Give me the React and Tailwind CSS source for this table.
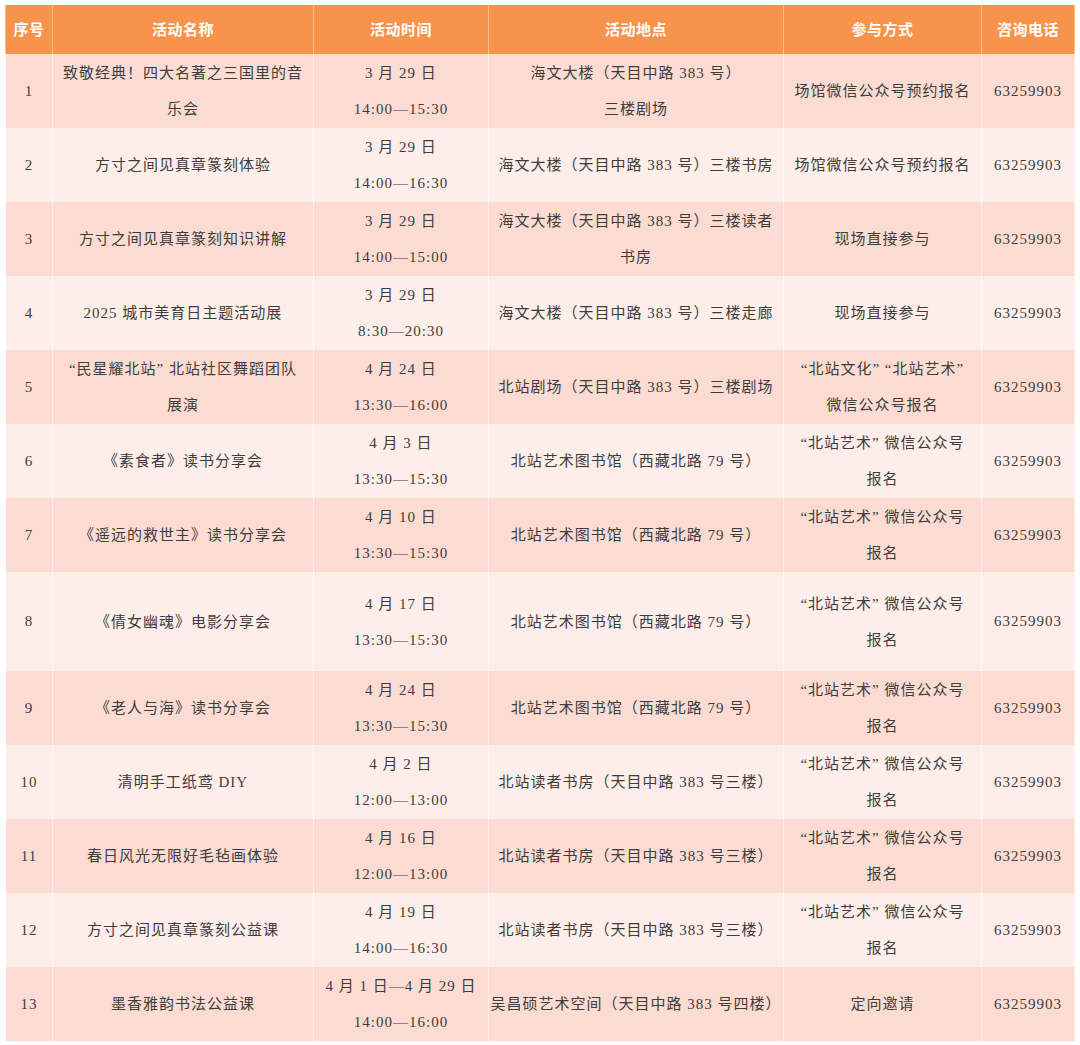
const columns = [
    { title: '序号', w: 'w-[47px]' },
    { title: '活动名称', w: 'w-[261px]' },
    { title: '活动时间', w: 'w-[175px]' },
    { title: '活动地点', w: 'w-[295px]' },
    { title: '参与方式', w: 'w-[198px]' },
    { title: '咨询电话', w: 'w-[93px]' },
]

const WX = ['“北站艺术” 微信公众号', '报名']

const rows = [
    { name: ['致敬经典！四大名著之三国里的音', '乐会'], date: '3 月 29 日', time: '14:00—15:30', place: ['海文大楼（天目中路 383 号）', '三楼剧场'], way: ['场馆微信公众号预约报名'] },
    { name: ['方寸之间见真章篆刻体验'], date: '3 月 29 日', time: '14:00—16:30', place: ['海文大楼（天目中路 383 号）三楼书房'], way: ['场馆微信公众号预约报名'] },
    { name: ['方寸之间见真章篆刻知识讲解'], date: '3 月 29 日', time: '14:00—15:00', place: ['海文大楼（天目中路 383 号）三楼读者', '书房'], way: ['现场直接参与'] },
    { name: ['2025 城市美育日主题活动展'], date: '3 月 29 日', time: '8:30—20:30', place: ['海文大楼（天目中路 383 号）三楼走廊'], way: ['现场直接参与'] },
    { name: ['“民星耀北站” 北站社区舞蹈团队', '展演'], date: '4 月 24 日', time: '13:30—16:00', place: ['北站剧场（天目中路 383 号）三楼剧场'], way: ['“北站文化” “北站艺术”', '微信公众号报名'] },
    { name: ['《素食者》读书分享会'], date: '4 月 3 日', time: '13:30—15:30', place: ['北站艺术图书馆（西藏北路 79 号）'], way: WX },
    { name: ['《遥远的救世主》读书分享会'], date: '4 月 10 日', time: '13:30—15:30', place: ['北站艺术图书馆（西藏北路 79 号）'], way: WX },
    { name: ['《倩女幽魂》电影分享会'], date: '4 月 17 日', time: '13:30—15:30', place: ['北站艺术图书馆（西藏北路 79 号）'], way: WX, tall: true },
    { name: ['《老人与海》读书分享会'], date: '4 月 24 日', time: '13:30—15:30', place: ['北站艺术图书馆（西藏北路 79 号）'], way: WX },
    { name: ['清明手工纸鸢 DIY'], date: '4 月 2 日', time: '12:00—13:00', place: ['北站读者书房（天目中路 383 号三楼）'], way: WX },
    { name: ['春日风光无限好毛毡画体验'], date: '4 月 16 日', time: '12:00—13:00', place: ['北站读者书房（天目中路 383 号三楼）'], way: WX },
    { name: ['方寸之间见真章篆刻公益课'], date: '4 月 19 日', time: '14:00—16:30', place: ['北站读者书房（天目中路 383 号三楼）'], way: WX },
    { name: ['墨香雅韵书法公益课'], date: '4 月 1 日—4 月 29 日', time: '14:00—16:00', place: ['吴昌硕艺术空间（天目中路 383 号四楼）'], way: ['定向邀请'] },
]

function Lines({ lines }) {
    return (
        <div className="flex flex-col items-center leading-[36px]">
            {lines.map((l, i) => (
                <span key={i} className="whitespace-pre">{l}</span>
            ))}
        </div>
    )
}

function Cell({ children }) {
    return (
        <td className="border-x border-white/50 px-1 text-center align-middle">
            {children}
        </td>
    )
}

export default function App() {
    return (
        <div className="w-[1080px] h-[1045px] bg-white pt-[5px] pl-[5px]" style={{ fontFamily: '"Liberation Serif", "Noto Sans CJK SC", serif' }}>
            <table className="w-[1069px] table-fixed border-collapse text-[15px] tracking-[1px] text-[#3d3d3d]">
                <thead>
                    <tr className="h-[49px] bg-[#f7934a]">
                        {columns.map((c) => (
                            <th
                                key={c.title}
                                className={`${c.w} border-x border-[#fbbf8c] text-center text-[15px] font-bold tracking-[0.5px] text-white`}
                                style={{ fontFamily: '"Noto Sans CJK SC", sans-serif' }}
                            >
                                {c.title}
                            </th>
                        ))}
                    </tr>
                </thead>
                <tbody>
                    {rows.map((r, i) => (
                        <tr
                            key={i}
                            className={`${r.tall ? 'h-[99px]' : 'h-[74px]'} ${i % 2 === 0 ? 'bg-[#fcdcd2]' : 'bg-[#fdeeea]'}`}
                        >
                            <Cell>{i + 1}</Cell>
                            <Cell><Lines lines={r.name} /></Cell>
                            <Cell><Lines lines={[r.date, r.time]} /></Cell>
                            <Cell><Lines lines={r.place} /></Cell>
                            <Cell><Lines lines={r.way} /></Cell>
                            <Cell>63259903</Cell>
                        </tr>
                    ))}
                </tbody>
            </table>
        </div>
    )
}
